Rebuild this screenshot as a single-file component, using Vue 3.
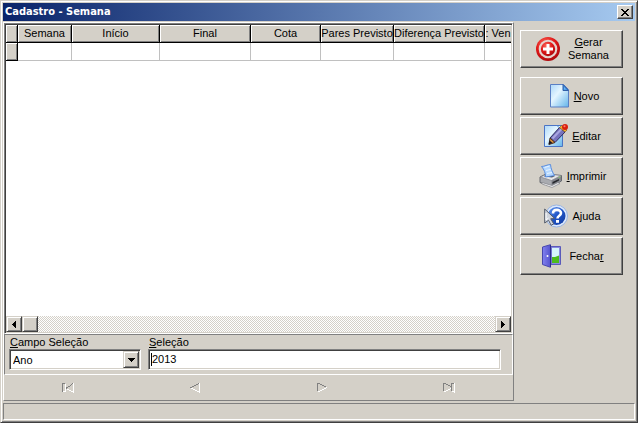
<script setup>
import { ref } from 'vue'

const field = ref('Ano')
const query = ref('2013')

const columns = [
  { label: 'Semana', width: 54 },
  { label: 'Início', width: 88 },
  { label: 'Final', width: 91 },
  { label: 'Cota', width: 70 },
  { label: 'Pares Previsto', width: 73 },
  { label: 'Diferença Previsto', width: 91 },
  { label: ': Ven', width: null },
]
</script>

<template>
  <main class="window">
    <header class="titlebar">
      <h1>Cadastro - Semana</h1>
      <button class="close" type="button" aria-label="X">
        <svg width="8" height="7" viewBox="0 0 8 7" shape-rendering="crispEdges">
          <path d="M0 0h2v1h1v1h2v-1h1v-1h2v1h-1v1h-1v1h-1v1h1v1h1v1h1v1h-2v-1h-1v-1h-2v1h-1v1h-2v-1h1v-1h1v-1h1v-1h-1v-1h-1v-1h-1z" />
        </svg>
      </button>
    </header>

    <div class="body">
      <section class="left">
        <div class="grid">
          <div class="rows">
            <table>
              <colgroup>
                <col class="marker" />
                <col v-for="c in columns" :key="c.label" :style="c.width ? { width: c.width + 'px' } : null" />
              </colgroup>
              <thead>
                <tr>
                  <th></th>
                  <th v-for="c in columns" :key="c.label" scope="col">{{ c.label }}</th>
                </tr>
              </thead>
              <tbody>
                <tr>
                  <th></th>
                  <td v-for="c in columns" :key="c.label"></td>
                </tr>
              </tbody>
            </table>
          </div>
          <div class="scroll">
            <button class="raised" type="button">
              <svg width="4" height="7" viewBox="0 0 4 7" shape-rendering="crispEdges"><path d="M4 0v7h-1v-1h-1v-1h-1v-1h-1v-1h1v-1h1v-1h1v-1z" /></svg>
            </button>
            <span class="raised"></span>
            <button class="raised end" type="button">
              <svg width="4" height="7" viewBox="0 0 4 7" shape-rendering="crispEdges"><path d="M0 0v7h1v-1h1v-1h1v-1h1v-1h-1v-1h-1v-1h-1v-1z" /></svg>
            </button>
          </div>
        </div>

        <form class="search" @submit.prevent>
          <div class="field choice">
            <label for="field"><u>C</u>ampo Seleção</label>
            <div class="combo sunken">
              <select id="field" v-model="field">
                <option>Ano</option>
              </select>
              <span class="raised drop">
                <svg width="7" height="4" viewBox="0 0 7 4" shape-rendering="crispEdges"><path d="M0 0h7v1h-1v1h-1v1h-1v1h-1v-1h-1v-1h-1v-1h-1z" /></svg>
              </span>
            </div>
          </div>
          <div class="field text">
            <label for="query"><u>S</u>eleção</label>
            <div class="entry sunken">
              <i class="caret"></i>
              <input id="query" v-model="query" type="text" />
            </div>
          </div>
        </form>

        <nav class="navigator">
          <button type="button" disabled>
            <svg width="12" height="10" viewBox="0 0 12 10">
              <path class="lit" d="M11.500 0v9.500M9 8.500h2M7 7.500h2M5 6.500h2M3.500 1v8M1 8.500h2" />
              <path class="dim" d="M.5 0v9M1 .5h2M4 4.500h2M6 3.500h2M8 2.500h1M9 1.500h1M10 .5h1M4.500 5v1" />
            </svg>
          </button>
          <button type="button" disabled>
            <svg width="10" height="10" viewBox="0 0 10 10">
              <path class="lit" d="M9.500 0v9.500M7 8.500h2M5 7.500h2M3 6.500h2M1 5.500h2" />
              <path class="dim" d="M0 4.500h2M2 3.500h2M4 2.500h2M6 1.500h2M8 .5h1" />
            </svg>
          </button>
          <button type="button" disabled>
            <svg width="10" height="10" viewBox="0 0 10 10">
              <path class="lit" d="M1 8.500h2M3 7.500h2M5 6.500h2M7 5.500h2M9 4.500h1" />
              <path class="dim" d="M.5 0v8M1 .5h2M3 1.500h2M5 2.500h2M7 3.500h2" />
            </svg>
          </button>
          <button type="button" disabled>
            <svg width="12" height="10" viewBox="0 0 12 10">
              <path class="lit" d="M1 8.500h2M3 7.500h2M5 6.500h2M7 5.500h1M11.500 0v9.500M9 8.500h3" />
              <path class="dim" d="M.5 0v8M1 .5h2M3 1.500h2M5 2.500h2M7 3.500h2M8.500 0v8M9 .5h2" />
            </svg>
          </button>
        </nav>
      </section>

      <aside class="actions">
        <button class="action first" type="button">
          <svg width="24" height="24" viewBox="0 0 24 24">
            <defs>
              <radialGradient id="red" cx=".4" cy=".3" r=".8"><stop offset="0" stop-color="#ff7060" /><stop offset=".5" stop-color="#e01818" /><stop offset="1" stop-color="#a0040a" /></radialGradient>
            </defs>
            <circle cx="12" cy="12" r="12" fill="url(#red)" />
            <circle cx="12" cy="12" r="9.300" fill="#e4d4ce" />
            <circle cx="12" cy="12" r="7.200" fill="url(#red)" />
            <path d="M10.500 7h3v3.500H17v3h-3.500V17h-3v-3.500H7v-3h3.500z" fill="#fff" />
          </svg>
          <span><u>G</u>erar<br />Semana</span>
        </button>
        <button class="action" type="button">
          <svg width="24" height="24" viewBox="0 0 24 24">
            <defs>
              <linearGradient id="paper" x1="0" y1="0" x2="1" y2="1"><stop offset=".1" stop-color="#b9defa" /><stop offset=".4" stop-color="#e4f5ff" /><stop offset="1" stop-color="#62b4ea" /></linearGradient>
            </defs>
            <path d="M4.500.5h13l5 5v17.500h-18z" fill="url(#paper)" stroke="#5a7fc4" />
            <path d="M17 .5l5.500 6H17z" fill="#3f93e2" stroke="#315fa8" />
            <path d="M18 3l2 2.500h-2z" fill="#6fb8f5" />
          </svg>
          <span><u>N</u>ovo</span>
        </button>
        <button class="action" type="button">
          <svg width="24" height="24" viewBox="0 0 24 24">
            <path d="M.5 1.500h18v21H.5z" fill="url(#paper)" stroke="#4b74c5" />
            <path d="M13 1.500l4 4" stroke="#4b8fd8" />
            <path d="M6 14L15.500 3.500l5.500 4.500L11 18.500z" fill="#7773bd" stroke="#2d2c60" />
            <path d="M8.500 14.500L17.500 5" stroke="#a9a6e0" stroke-width="2" />
            <path d="M6 14l5 4.500-6 2z" fill="#d8903a" stroke="#4b3020" />
            <path d="M5.500 16.500l3 2.500-4 1.500z" fill="#151522" />
            <path d="M15.500 3.500l2-2 5.500 4.500-2 2z" fill="#f0b02e" stroke="#8b5a1e" stroke-width=".7" />
            <circle cx="21" cy="3" r="3" fill="#d92010" />
            <circle cx="20.500" cy="2.200" r="1" fill="#ff8068" />
          </svg>
          <span><u>E</u>ditar</span>
        </button>
        <button class="action" type="button">
          <svg width="24" height="24" viewBox="0 0 24 24">
            <path d="M1 13l6-3 15.500 1.500v5.500l-10 5.500L1 18.500z" fill="#a9abb0" stroke="#66686f" />
            <path d="M1.500 13l6.500-3 14 1.500-9.500 5z" fill="#e6e7e9" stroke="#82838a" stroke-width=".7" />
            <path d="M12.500 16.500l9.500-4.500v4.500l-9.500 5.500z" fill="#83858c" />
            <path d="M13.500 18l6.500-3v1.500l-6.500 3.500z" fill="#25272c" />
            <path d="M5 12.500l8 1 3-1.500-9-1.500z" fill="#4f555e" />
            <path d="M2.500 2.500c3 0 6-2 9-2 .3 4 2 8 4 11l-9 1.500c0-4-1-7-4-10.500z" fill="#b5d8ff" stroke="#4f86dc" stroke-width=".9" />
            <path d="M5.500 3.500l5-1.500M7 6.500l4.500-1M8 9.500l5-1" stroke="#e8f5ff" />
            <path d="M3 18.500l10 3 6-3 2 1-8 4-10-3.500z" fill="#e9e9eb" stroke="#777980" stroke-width=".6" />
            <path d="M19.500 13.500l2-1" stroke="#8bd46c" />
          </svg>
          <span><u>I</u>mprimir</span>
        </button>
        <button class="action" type="button">
          <svg width="24" height="24" viewBox="0 0 24 24">
            <defs>
              <linearGradient id="ball" x1="0" y1="0" x2="1" y2="1"><stop offset="0" stop-color="#6a9cf0" /><stop offset=".5" stop-color="#2055c7" /><stop offset="1" stop-color="#123a9e" /></linearGradient>
            </defs>
            <circle cx="12.500" cy="12" r="11" fill="#dce8fb" stroke="#9ab4e0" />
            <circle cx="12.500" cy="12" r="9" fill="url(#ball)" />
            <path d="M9 9.500c0-5 8-4.500 8-.5 0 3-3.500 2.500-3.500 5.500" fill="none" stroke="#fff" stroke-width="2.600" />
            <path d="M12 16h3v2.800h-3z" fill="#fff" />
            <path d="M.7 5l10 9.500-4 .3 3 5-2.500 1.500-2.700-5L.7 19z" fill="#cfd4dd" stroke="#535b69" />
            <path d="M2 9v7l2.500-2" stroke="#fff" fill="none" />
          </svg>
          <span>Ajuda</span>
        </button>
        <button class="action" type="button">
          <svg width="24" height="24" viewBox="0 0 24 24">
            <defs>
              <linearGradient id="door" x1="0" y1="0" x2="1" y2="0"><stop offset="0" stop-color="#8282f0" /><stop offset="1" stop-color="#5553cc" /></linearGradient>
            </defs>
            <path d="M10 2.500h9.500v18H10z" fill="#8a8ae0" stroke="#5a5aba" />
            <path d="M11 4h7v10h-7z" fill="#d5f5fb" />
            <path d="M11 13h3l4-1.500V19h-7z" fill="#4cbb1c" />
            <path d="M1.500 3L9.500.7v22.600l-8-2.800z" fill="url(#door)" stroke="#4646ae" />
            <path d="M9.500 1v22" stroke="#2e2e88" />
            <circle cx="6.500" cy="12" r="1" fill="#fff" />
          </svg>
          <span>Fecha<u>r</u></span>
        </button>
      </aside>
    </div>

    <footer class="status"></footer>
  </main>
</template>

<style>
body {
  margin: 0;
  background: #d4d0c8;
}
</style>

<style scoped>
* {
  box-sizing: border-box;
}

.window {
  display: flex;
  flex-direction: column;
  min-height: 100vh;
  padding: 1px 1px 0 1px;
  border: 1px solid;
  border-color: #d4d0c8 #404040 #404040 #d4d0c8;
  box-shadow: inset 1px 1px #fff, inset -1px -1px #808080;
  background: #d4d0c8;
  color: #000;
  font: 11px/13px "Liberation Sans", Arial, sans-serif;
}

button,
input,
select {
  margin: 0;
  padding: 0;
  border: 0;
  border-radius: 0;
  outline: 0;
  background: none;
  color: inherit;
  font: inherit;
}

.titlebar {
  display: flex;
  align-items: center;
  justify-content: space-between;
  height: 18px;
  margin: 1px 1px 0 1px;
  padding: 0 2px;
  background: linear-gradient(90deg, #0a246a, #a6caf0);
}

h1 {
  margin: 0;
  color: #fff;
  font: bold 11px/18px "DejaVu Sans Condensed", Tahoma, sans-serif;
}

.raised,
.close {
  display: flex;
  align-items: center;
  justify-content: center;
  width: 16px;
  height: 16px;
  border: 1px solid;
  border-color: #d4d0c8 #404040 #404040 #d4d0c8;
  box-shadow: inset 1px 1px #fff, inset -1px -1px #808080;
  background: #d4d0c8;
}

.close {
  height: 14px;
  border-color: #fff #404040 #404040 #fff;
  box-shadow: inset -1px -1px #808080;
}

.body {
  display: flex;
  flex: 1;
  padding: 1px 13px 0 1px;
}

.left {
  display: flex;
  flex: 1;
  flex-direction: column;
  min-width: 0;
  border: 1px solid;
  border-color: #fff #808080 #808080 #fff;
}

.sunken,
.grid {
  border: 1px solid;
  border-color: #808080 #fff #fff #808080;
  box-shadow: inset 1px 1px #404040, inset -1px -1px #d4d0c8;
  background: #fff;
}

.grid {
  display: flex;
  flex: 1;
  flex-direction: column;
  padding: 1px;
}

.rows {
  flex: 1;
  overflow: hidden;
}

table {
  width: 100%;
  border-spacing: 0;
  table-layout: fixed;
}

.marker {
  width: 12px;
}

th,
td {
  height: 18px;
  padding: 0;
  overflow: hidden;
  border-right: 1px solid #c0c0c0;
  border-bottom: 1px solid #c0c0c0;
  font-weight: normal;
  text-align: center;
  white-space: nowrap;
}

th {
  border-color: #000;
  box-shadow: inset 1px 1px #fff, inset -1px -1px #808080;
  background: #d4d0c8;
}

th:last-child,
td:last-child {
  border-right: 0;
}

th:last-child {
  box-shadow: inset 1px 1px #fff, inset 0 -1px #808080;
}

.scroll {
  display: flex;
  background: repeating-conic-gradient(#fff 0 25%, #d4d0c8 0 50%) 0 0 / 2px 2px;
}

.end {
  margin-left: auto;
}

.search {
  display: flex;
  gap: 7px;
  padding: 1px 11px 4px 4px;
  border: 1px solid;
  border-color: #808080 #fff #fff #808080;
}

.field {
  display: flex;
  flex-direction: column;
}

.choice {
  width: 132px;
}

.text {
  flex: 1;
}

.field label {
  padding-left: 1px;
}

.combo {
  display: grid;
  height: 21px;
  padding: 1px;
}

.combo select {
  grid-area: 1 / 1;
  width: 100%;
  padding: 2px 18px 0 2px;
  appearance: none;
}

.combo .drop {
  grid-area: 1 / 1;
  justify-self: end;
  height: 17px;
  pointer-events: none;
}

.entry {
  display: flex;
  align-items: center;
  height: 21px;
  padding: 0 2px;
}

.caret {
  width: 1px;
  height: 13px;
  background: #000;
}

.entry input {
  flex: 1;
  min-width: 0;
}

.navigator {
  display: grid;
  grid-template-columns: repeat(4, 1fr);
}

.navigator button {
  display: flex;
  align-items: center;
  justify-content: center;
  height: 25px;
}

.navigator path {
  fill: none;
  shape-rendering: crispEdges;
}

.navigator .lit {
  stroke: #fff;
}

.navigator .dim {
  stroke: #808080;
}

.actions {
  display: flex;
  flex-direction: column;
  gap: 2px;
  width: 109px;
  padding: 8px 0 0 6px;
}

.action {
  display: flex;
  align-items: center;
  justify-content: center;
  gap: 4px;
  height: 38px;
  padding-left: 2px;
  border: 1px solid;
  border-color: #fff #404040 #404040 #fff;
  box-shadow: inset -1px -1px #808080;
  background: #d4d0c8;
}

.action.first {
  gap: 8px;
  margin-bottom: 7px;
}

.status {
  height: 17px;
  margin: 2px 1px;
  border: 1px solid;
  border-color: #808080 #fff #fff #808080;
}
</style>
